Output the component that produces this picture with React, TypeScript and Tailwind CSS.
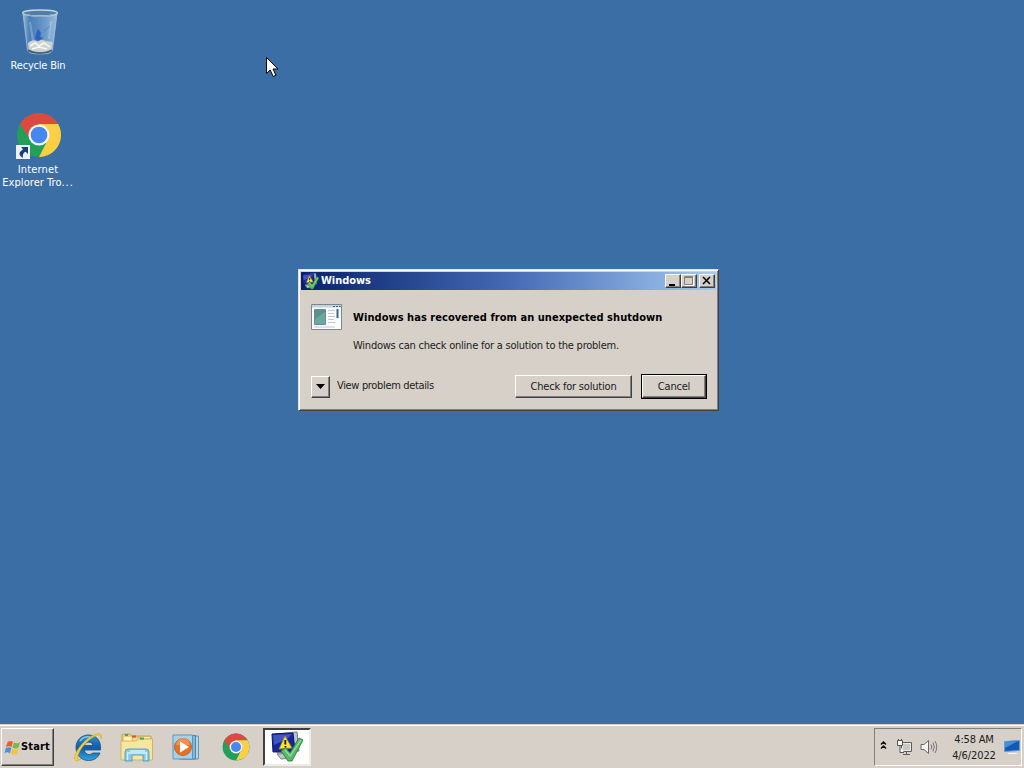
import type { ReactNode } from "react";

const raised =
  "bg-[#d6d0c9] border border-t-white border-l-white border-r-[#404040] border-b-[#404040] shadow-[inset_-1px_-1px_0_#808080]";

function ChromeIcon({ className }: { className: string }) {
  return (
    <svg viewBox="0 0 48 48" className={className}>
      <circle cx="24" cy="24" r="23" fill="#22a05a" />
      <path d="M4.1 12.5A23 23 0 0 1 43.9 12.5L24 13.5L14.9 29.3Z" fill="#db4a3d" />
      <path d="M43.9 12.5A23 23 0 0 1 24 47L33.1 29.3A10.5 10.5 0 0 0 24 13.5V12.5Z" fill="#fdcf44" />
      <circle cx="24" cy="24" r="11" fill="#f4f7fb" />
      <circle cx="24" cy="24" r="8.7" fill="#4688f0" />
    </svg>
  );
}

function RecycleBinIcon() {
  return (
    <svg viewBox="0 0 40 48" className="w-10 h-12">
      <defs>
        <linearGradient id="glass" x1="0" x2="1">
          <stop offset="0" stopColor="#b8d2ea" stopOpacity=".8" />
          <stop offset=".2" stopColor="#5b8fc8" stopOpacity=".5" />
          <stop offset=".65" stopColor="#86b2df" stopOpacity=".65" />
          <stop offset="1" stopColor="#c6ddf0" stopOpacity=".7" />
        </linearGradient>
      </defs>
      <path d="M3 5L7.500 41Q8 45 20 45T32.500 41L37 5Z" fill="url(#glass)" stroke="#a4c1da" strokeWidth=".8" />
      <path d="M8 34Q12 30 17 32Q22 30 26 32L32.500 33L31.500 40Q28 43 20 43T8.500 40Z" fill="#cfd3d0" />
      <path d="M10 37l5-3 4 3 5-3 6 4M12 40l7-2 8 2" fill="none" stroke="#f8f8f4" strokeWidth="1.500" />
      <path d="M8 41.500Q20 47 32 41.500" fill="none" stroke="#475d70" strokeWidth="1.500" />
      <path d="M16 25l2-5 3 4-1 4 3 1-5 3-3-2zM24 22l6-5" fill="#2a61bd" stroke="#3e73c4" strokeWidth=".7" />
      <path d="M10 13l3 19M31 12l-2 18" stroke="#d8e8f5" strokeOpacity=".3" strokeWidth="2" />
      <ellipse cx="20" cy="4" rx="17.300" ry="3" fill="#527da7" stroke="#c6d6df" strokeWidth="1.400" />
      <path d="M5 5Q20 10 35 5" fill="none" stroke="#8ba9bf" strokeWidth="1" />
    </svg>
  );
}

// Monitor with a warning sign and a green check in front of it
function ActionIcon({ className }: { className: string }) {
  return (
    <svg viewBox="0 0 32 32" className={className}>
      <path d="M4 3L26 1L28 20L6 22Z" fill="#b9c3d2" stroke="#6c7890" />
      <path d="M1 3L22 2L24 20L2 21Z" fill="#16279c" stroke="#091763" />
      <path d="M2 4L21 3L16 8L3 14Z" fill="#4054c6" />
      <path d="M6 23L20 22L22 27L10 28Z" fill="#c3c7c9" stroke="#7d858b" />
      <path d="M14 5L21 17L8 18Z" fill="#ffe735" stroke="#a48910" strokeWidth=".8" />
      <path d="M14.300 9V13.500M14.500 15V16.500" stroke="#111" strokeWidth="1.800" />
      <path d="M10 20L14.500 16.500L19 22L28 7L32 9L21 30H17Z" fill="#55b968" stroke="#27813a" strokeWidth=".9" />
      <path d="M14 19L19 25L30 9" fill="none" stroke="#a2dca4" strokeWidth="1.200" />
    </svg>
  );
}

function WindowsFlag() {
  return (
    <svg viewBox="0 0 18 18" className="w-[17px] h-[17px] shrink-0">
      <path d="M4 3Q7 1 9.500 3L8 8.500Q5 7 2 8.500Z" fill="#e9602f" />
      <path d="M10.500 3.500Q13 5.500 17 3.500L15.500 9Q12 11 9 9Z" fill="#79b84c" />
      <path d="M2 9.500Q5 8 7.800 9.500L6.300 15Q3.500 13 .5 15Z" fill="#4b91dc" />
      <path d="M8.800 10Q12 12 15.200 10L13.700 15.500Q10.500 17.500 7.300 15.500Z" fill="#f4c533" />
    </svg>
  );
}

function ExplorerIcon() {
  return (
    <svg viewBox="0 0 32 32" className="w-8 h-8">
      <defs>
        <linearGradient id="ie" x2="0" y2="1">
          <stop stopColor="#3191d0" />
          <stop offset=".5" stopColor="#115aa5" />
          <stop offset="1" stopColor="#2ba7e2" />
        </linearGradient>
      </defs>
      <path
        d="M28.500 19H12.500C12.800 24 19 24.500 20.500 22H28C25.500 27.500 21.500 29.500 16.500 29.500C9 29.500 4 24 4 16.500C4 9 9.500 4 16.500 4C24 4 29.500 9.500 28.500 19ZM12.500 14.500H21C20.600 10 13 10 12.500 14.500Z"
        fill="url(#ie)"
        stroke="#124c85"
        strokeWidth=".8"
      />
      <path d="M8 10Q12 5 18 6" fill="none" stroke="#7fcdf0" strokeWidth="1.500" />
      <path
        d="M29 8C31 3 28 1 22 4C13 8 5 18 3 25C1.500 31 5 31 9 28C5 29.500 4.500 27 7 21.500C10 15 17 8 23 5C27 3 29 4 29 8Z"
        fill="#f5cf45"
        stroke="#dcb23a"
        strokeWidth=".8"
      />
    </svg>
  );
}

function FolderIcon() {
  return (
    <svg viewBox="0 0 34 32" className="w-[34px] h-8">
      <path d="M2 4Q2 3 3 3H10L12 5H31V25H2Z" fill="#e7cd72" stroke="#b69c48" strokeWidth=".8" />
      <path d="M4 6H30V17H4Z" fill="#fff2b5" />
      <path d="M12 6H20L21 8H32V27H12Z" fill="#edd787" stroke="#c3aa58" strokeWidth=".6" />
      <path d="M1 10H16L18 8H32.500V29H1Z" fill="#f7e69e" stroke="#c8ad55" strokeWidth=".8" />
      <path d="M5 4H8" stroke="#45a06f" strokeWidth="2" />
      <path d="M12 5.500H16" stroke="#cf5440" strokeWidth="2" />
      <path d="M20 7.500H24" stroke="#45a06f" strokeWidth="2" />
      <path d="M5 30V21Q5 18 8 18H26Q29 18 29 21V30H23V24H12V30Z" fill="#8acbe8" stroke="#5099be" strokeWidth=".9" />
      <path d="M7.500 29V22H26.500V29M10 20H25" fill="none" stroke="#d2f2fb" strokeWidth="1.300" />
    </svg>
  );
}

function MediaPlayerIcon() {
  return (
    <svg viewBox="0 0 28 28" className="w-7 h-7">
      <path d="M10 3H26.500V26H10Z" fill="#b2d6ea" stroke="#6598b8" />
      <path d="M7 2.500H23.500V26H7Z" fill="#80b8da" stroke="#4c86ad" />
      <path d="M1 2H20.500V26H1Z" fill="#a5d2ea" stroke="#5899c0" />
      <circle cx="11" cy="14" r="8.500" fill="#e57127" stroke="#c9662a" />
      <path d="M4 12A7 7 0 0 1 18 12Z" fill="#ee9152" />
      <path d="M8 8.500L17 14L8 19.500Z" fill="#fff" />
    </svg>
  );
}

function ProgramIcon() {
  return (
    <svg viewBox="0 0 31 26" className="w-[31px] h-[26px]">
      <path d="M.5.5H30.500V25.500H.5Z" fill="#fcfdfb" stroke="#7d8790" />
      <path d="M1 1H30V3.500H1Z" fill="#c3d2dd" />
      <path d="M22 2.500H24M25 2.500H27M28 2.500H29.500" stroke="#4a6077" />
      <path d="M3.500 5.500H14.500V20.500H3.500Z" fill="#579485" stroke="#6b88a9" />
      <path d="M4 15L14 8V20H4Z" fill="#6aa995" />
      <path d="M17 6.500H24M17 9.500H23M17 12.500H24M17 15.500H23M17 18.500H24M3 23H24" stroke="#c3c9cc" />
      <path d="M26.500 5V14" stroke="#376396" strokeWidth="2" />
    </svg>
  );
}

function DesktopItem({ icon, children }: { icon: ReactNode; children: ReactNode }) {
  return (
    <div className="w-[76px] flex flex-col items-center text-white text-center leading-[13px] whitespace-nowrap">
      {icon}
      {children}
    </div>
  );
}

function Dialog() {
  return (
    <div className="absolute left-[298px] top-[269px] w-[421px] h-[142px] flex flex-col bg-[#d6d0c9] p-[2px] border border-t-[#e4e2dc] border-l-[#e4e2dc] border-r-[#404040] border-b-[#404040] shadow-[inset_1px_1px_0_#fff,inset_-1px_-1px_0_#808080]">
      <div className="h-[18px] shrink-0 flex items-center pl-[1px] pr-[1px] bg-gradient-to-r from-[#0a226c] via-[#4669b4] to-[#a6caf0] text-white font-bold">
        <ActionIcon className="w-[17px] h-[17px] mr-[2px]" />
        <span className="tracking-[-0.05px]">Windows</span>
        <div className="ml-auto flex h-[14px]">
          <div className={`w-4 ${raised}`}>
            <svg viewBox="0 0 14 12" className="w-[14px] h-3"><path d="M3 9H9V11H3Z" /></svg>
          </div>
          <div className={`w-4 ${raised}`}>
            <svg viewBox="0 0 14 12" className="w-[14px] h-3"><path d="M2.500 1.500H10.500V9.500H2.500ZM2 2.500H11" fill="none" stroke="#808080" /><path d="M11.500 2V10.500H3" fill="none" stroke="#fff" /></svg>
          </div>
          <div className={`w-4 ml-[2px] ${raised}`}>
            <svg viewBox="0 0 14 12" className="w-[14px] h-3"><path d="M3 2L10 9M10 2L3 9" stroke="#000" strokeWidth="1.600" /></svg>
          </div>
        </div>
      </div>
      <div className="flex-1 flex flex-col text-[#202020]">
        <div className="flex pl-[10px] pt-[14px]">
          <ProgramIcon />
          <div className="ml-[11px] pt-[1px] whitespace-nowrap">
            <h1 className="font-bold text-black leading-[26px] tracking-[0.05px]">Windows has recovered from an unexpected shutdown</h1>
            <p className="mt-[7px] leading-4 tracking-[-0.23px]">Windows can check online for a solution to the problem.</p>
          </div>
        </div>
        <div className="mt-auto mb-[9px] pl-[10px] pr-[9px] flex items-center">
          <div className={`w-[19px] h-[22px] flex items-center justify-center ${raised}`}>
            <svg viewBox="0 0 9 5" className="w-[9px] h-[5px]"><path d="M0 0H9L4.500 5Z" /></svg>
          </div>
          <span className="ml-[7px] -mt-[1px] tracking-[-0.34px]">View problem details</span>
          <button className={`ml-auto w-[117px] h-[23px] pt-[2px] ${raised}`}>Check for solution</button>
          <div className="ml-[9px] border border-black">
            <button className={`w-[64px] h-[23px] pt-[2px] block ${raised}`}>Cancel</button>
          </div>
        </div>
      </div>
    </div>
  );
}

function Taskbar() {
  return (
    <div className="h-11 shrink-0 bg-[#d6d0c9] shadow-[inset_0_1px_0_#d6d0c9,inset_0_2px_0_#fff] flex items-center pt-[2px]">
      <button className={`ml-[1px] w-[53px] h-[38px] flex items-center pl-[2px] font-bold text-black tracking-[0.15px] ${raised}`}>
        <WindowsFlag />
        <span>Start</span>
      </button>
      <div className="ml-[18px]"><ExplorerIcon /></div>
      <div className="ml-4"><FolderIcon /></div>
      <div className="ml-[18px]"><MediaPlayerIcon /></div>
      <div className="ml-[22px]"><ChromeIcon className="w-7 h-7" /></div>
      <div className="ml-[13px] w-[48px] h-[38px] bg-white border-2 border-t-[#404040] border-l-[#404040] border-r-[#eeece7] border-b-[#eeece7] flex items-center justify-center">
        <ActionIcon className="w-8 h-8" />
      </div>
      <div className="ml-auto mr-[2px] w-[148px] h-[38px] flex items-center border border-t-[#808080] border-l-[#808080] border-r-white border-b-white">
        <svg viewBox="0 0 7 8" className="w-[7px] h-2 ml-[5px] -mt-1"><path d="M1 3.500L3.500 1L6 3.500M1 7.500L3.500 5L6 7.500" fill="none" stroke="#111" strokeWidth="1.500" /></svg>
        <svg viewBox="0 0 17 17" className="w-[17px] h-[17px] ml-[9px]">
          <path d="M5.500 3.500H15.500V12.500H5.500ZM7 15.500H14M10.500 13V15" fill="#e9e8e4" stroke="#5c5c5c" />
          <path d="M7 5H14V11H7Z" fill="#c8c7c2" />
          <path d="M1.500 1.500H6.500V6.500H1.500ZM2.500 0V2M5.500 0V2M4 7V13.500H8" fill="#f6f5f2" stroke="#555" />
        </svg>
        <svg viewBox="0 0 18 16" className="w-[18px] h-4 ml-[7px]">
          <path d="M1 5.500H4L8.500 1.500V14.500L4 10.500H1Z" fill="#f5f4f0" stroke="#666" />
          <path d="M11 5.500Q12.500 8 11 10.500M13 3.500Q15.500 8 13 12.500M15 2Q18.500 8 15 14" fill="none" stroke="#777" />
        </svg>
        <div className="ml-[12px] pt-[1px] w-[48px] text-center leading-4 text-[#202020] whitespace-nowrap">
          <div>4:58 AM</div>
          <div className="tracking-[-0.1px]">4/6/2022</div>
        </div>
        <svg viewBox="0 0 16 14" className="w-4 h-[14px] ml-[6px]">
          <path d="M.5 1.500L15.500.5V10.500L.5 11.500Z" fill="#1559b4" stroke="#5aa2de" />
          <path d="M1 2L14 1L1 8Z" fill="#438fd9" />
          <path d="M4 13.500H13" stroke="#ecf3fa" />
        </svg>
      </div>
    </div>
  );
}

export default function App() {
  return (
    <div className="relative w-screen h-screen overflow-hidden flex flex-col bg-[#3a6ea5] text-[11px] tracking-[-0.2px] font-['DejaVu_Sans_Condensed','DejaVu_Sans',sans-serif] cursor-default">
      <main className="flex-1 flex flex-col items-start pt-[9px]">
        <DesktopItem icon={<div className="ml-[3px] mb-[2px]"><RecycleBinIcon /></div>}>Recycle Bin</DesktopItem>
        <div className="mt-[39px]">
          <DesktopItem
            icon={
              <div className="relative ml-[2px] mb-[4px]">
                <ChromeIcon className="w-[46px] h-[48px]" />
                <svg viewBox="0 0 14 14" className="absolute left-0 bottom-0 w-[14px] h-[14px]">
                  <path d="M0 0H14V14H0Z" fill="#edf3f8" />
                  <path d="M5 2H12V9L9.700 6.800Q6 8 7 13Q0 9 7 4.200Z" fill="#173f79" />
                </svg>
              </div>
            }
          >
            <span className="tracking-[0.15px]">Internet</span>
            <span className="tracking-[0.05px]">Explorer Tro<span className="tracking-[0.9px]">...</span></span>
          </DesktopItem>
        </div>
      </main>
      <Dialog />
      <svg viewBox="0 0 13 21" className="absolute left-[266px] top-[57px] w-[13px] h-[21px]">
        <path d="M.5.5V16.500L4.200 13L7.200 19.500L10 18.200L7 12H12Z" fill="#fff" stroke="#000" />
      </svg>
      <Taskbar />
    </div>
  );
}
